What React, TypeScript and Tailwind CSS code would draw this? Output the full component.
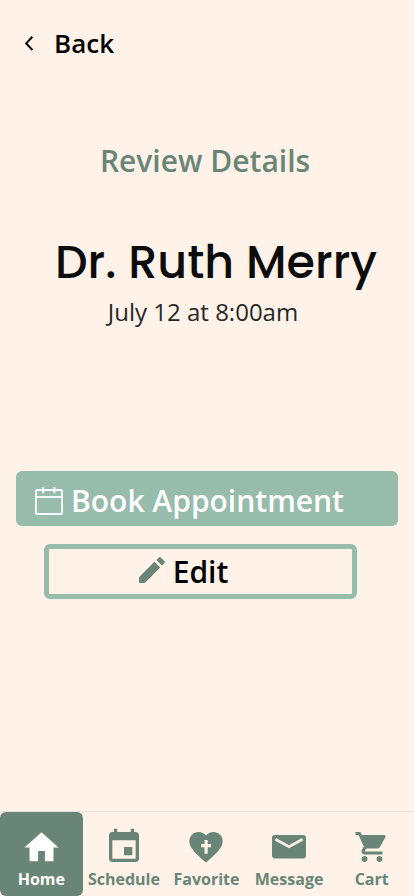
import { ReactNode } from "react";
import { MdHome, MdShoppingCart } from "react-icons/md";

interface NavItemProps {
    label: string;
    icon: ReactNode;
    active?: boolean;
}

function CalendarOutline() {
    return (
        <svg width="28" height="28" viewBox="0 0 28 28" fill="none" stroke="currentColor" strokeWidth="1.8" aria-hidden="true">
            <rect x="0.9" y="3" width="26.2" height="24" rx="1.6" />
            <path d="M1 10h26" />
            <path d="M8.2 0v6.2M19.5 0v6.2" strokeWidth="2" />
        </svg>
    );
}

function Pencil() {
    return (
        <svg width="26" height="26" viewBox="0 0 26 26" fill="currentColor" aria-hidden="true">
            <path d="M0 20.2L15.4 4.8l5.8 5.8L6.6 25.2q-.8.8-1.8.8H1.2Q0 26 0 24.8z" />
            <path d="M17.4 3l2.4-2.4q1-1 2 0l3.6 3.6q1 1 0 2L22.9 8.6z" />
        </svg>
    );
}

function CalendarSolid() {
    return (
        <svg width="40" height="40" viewBox="0 0 24 24" fill="currentColor" aria-hidden="true">
            <path d="M17 12h-5v5h5v-5zM16 1v2H8V1H6v2H5c-1.11 0-1.99.9-1.99 2L3 19c0 1.1.89 2 2 2h14c1.1 0 2-.9 2-2V5c0-1.1-.9-2-2-2h-1V1h-2zm3 18H5V8h14v11z" />
        </svg>
    );
}

function HeartCross() {
    return (
        <svg width="40" height="40" viewBox="0 0 24 24" fill="currentColor" aria-hidden="true">
            <path d="M12 21.35l-1.45-1.32C5.4 15.36 2 12.28 2 8.5 2 5.42 4.42 3 7.5 3c1.74 0 3.41.81 4.5 2.09C13.09 3.81 14.76 3 16.5 3 19.58 3 22 5.42 22 8.5c0 3.78-3.4 6.86-8.55 11.54L12 21.35z" />
            <path className="fill-[#fff2e8]" d="M11.1 7.8h1.9v2.4h2v1.9h-2v4h-1.9v-4h-2v-1.9h2z" />
        </svg>
    );
}

function Envelope() {
    return (
        <svg width="34" height="24" viewBox="0 0 34 24" fill="currentColor" aria-hidden="true">
            <rect width="34" height="23.4" rx="2.8" />
            <path className="stroke-[#fff2e8]" d="M3.4 4.2L17 11.8l13.6-7.6" fill="none" strokeWidth="2.7" />
        </svg>
    );
}

function NavItem({ label, icon, active }: NavItemProps) {
    return (
        <a
            href="#"
            aria-current={active ? "page" : undefined}
            className={
                active
                    ? "flex flex-1 basis-0 flex-col items-center rounded-md bg-[#698577] pt-[11px] text-white"
                    : "flex flex-1 basis-0 flex-col items-center pt-[11px] text-[#698577]"
            }
        >
            <span className="flex h-12 items-center justify-center">{icon}</span>
            <span className="text-base leading-4 font-bold">{label}</span>
        </a>
    );
}

export default function App() {
    return (
        <div className="flex min-h-screen flex-col bg-[#fff2e8] font-['Open_Sans','Noto_Sans',sans-serif] text-black">
            <header className="flex px-6 pt-[23px]">
                <button type="button" className="flex items-center gap-5 text-[26px] leading-10 font-semibold">
                    <svg width="10" height="16" viewBox="0 0 10 16" fill="none" stroke="currentColor" strokeWidth="2" aria-hidden="true">
                        <path d="M8.4 1.8L2.2 8.4l6.2 6.6" />
                    </svg>
                    Back
                </button>
            </header>

            <main className="flex flex-col px-4 pt-[78px]">
                <h2 className="pr-1 text-center text-[30px] leading-10 font-semibold text-[#698577]">Review Details</h2>
                <h1 className="mt-[49px] pl-[18px] text-center font-['Poppins','Inter',sans-serif] text-[46px] leading-16 font-medium whitespace-nowrap text-[#0b0d0c]">
                    Dr. Ruth Merry
                </h1>
                <p className="mt-0.5 pr-2 text-center text-2xl leading-8 text-[#262827]">July 12 at 8:00am</p>

                <button
                    type="button"
                    className="mt-[143px] flex h-[55px] items-center gap-2 rounded-md bg-[#97bcab] px-[19px] pt-1 text-[30px] font-semibold whitespace-nowrap text-white"
                >
                    <CalendarOutline />
                    Book Appointment
                </button>
                <button
                    type="button"
                    className="mt-[18px] mr-[41px] ml-7 flex h-[55px] items-center justify-center gap-2 rounded-md border-5 border-[#97bcab] pr-[34px] text-[30px] font-semibold"
                >
                    <span className="pb-1 text-[#698577]"><Pencil /></span>
                    Edit
                </button>
            </main>

            <nav className="mt-auto flex h-[85px] border-t border-[#e6e0dc] pr-px">
                <NavItem label="Home" icon={<MdHome size={41} />} active />
                <NavItem label="Schedule" icon={<CalendarSolid />} />
                <NavItem label="Favorite" icon={<HeartCross />} />
                <NavItem label="Message" icon={<Envelope />} />
                <NavItem label="Cart" icon={<MdShoppingCart size={36} />} />
            </nav>
        </div>
    );
}
